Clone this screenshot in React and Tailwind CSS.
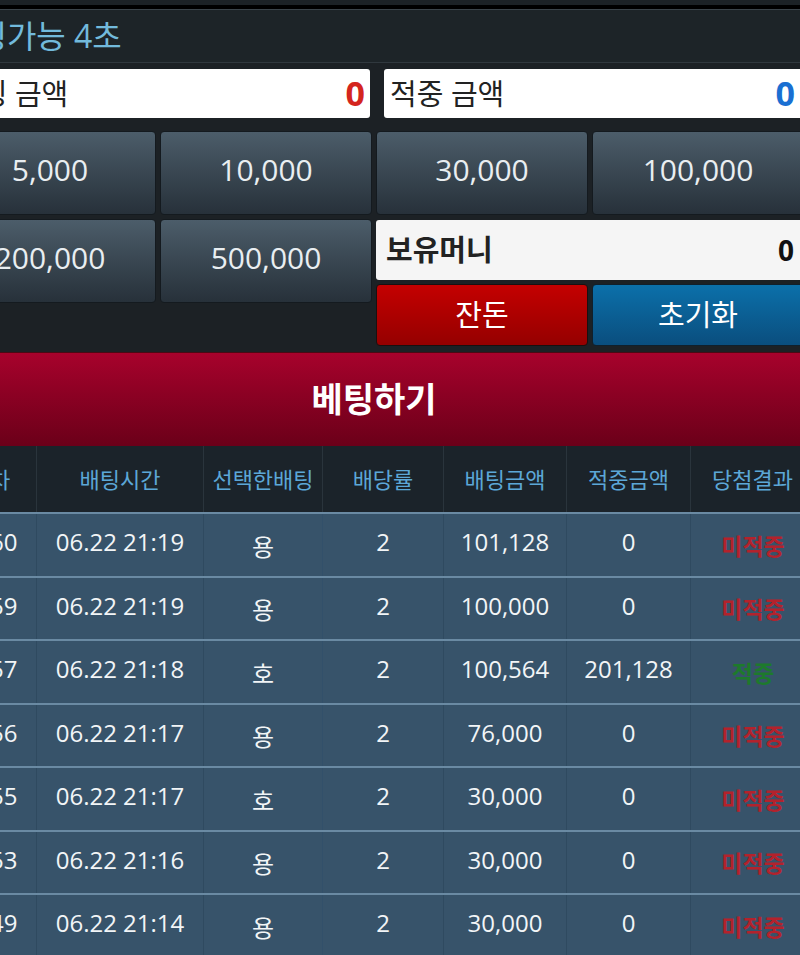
import React from 'react';

const font = { fontFamily: '"Open Sans", "Noto Sans CJK KR", sans-serif' };

const rows = [
  { no: '1260', time: '06.22 21:19', pick: '용', odds: '2', bet: '101,128', win: '0', result: '미적중' },
  { no: '1259', time: '06.22 21:19', pick: '용', odds: '2', bet: '100,000', win: '0', result: '미적중' },
  { no: '1257', time: '06.22 21:18', pick: '호', odds: '2', bet: '100,564', win: '201,128', result: '적중' },
  { no: '1256', time: '06.22 21:17', pick: '용', odds: '2', bet: '76,000', win: '0', result: '미적중' },
  { no: '1255', time: '06.22 21:17', pick: '호', odds: '2', bet: '30,000', win: '0', result: '미적중' },
  { no: '1253', time: '06.22 21:16', pick: '용', odds: '2', bet: '30,000', win: '0', result: '미적중' },
  { no: '1249', time: '06.22 21:14', pick: '용', odds: '2', bet: '30,000', win: '0', result: '미적중' },
];

const headers = ['회차', '배팅시간', '선택한배팅', '배당률', '배팅금액', '적중금액', '당첨결과'];

const ChipButton = ({ label }) => (
  <button className="h-[84px] pb-[8px] rounded-[4px] border border-[#141a1f] bg-gradient-to-b from-[#4c5d6a] to-[#27313a] text-[30px] text-[#e9eef1]">
    {label}
  </button>
);

const App = () => {
  return (
    <div className="w-[800px] h-[955px] overflow-hidden bg-[#1c2125]" style={font}>
      <div className="-ml-[56px] w-[871px]">
        {/* top strip */}
        <div className="h-[5px] bg-[#1c2226]" />
        <div className="h-[4px] bg-black" />
        <div className="h-[1px] bg-[#3b444a]" />

        {/* title */}
        <div className="h-[53px] bg-[#1d2428] border-b border-[#30383e] flex items-center pl-[4px]">
          <span className="text-[32px] text-[#72badc] leading-none">배팅가능 4초</span>
        </div>

        <div className="w-[860px] pt-[6px]">
          {/* amounts */}
          <div className="flex gap-[14px]">
            <div className="w-[426px] h-[49px] bg-white rounded-[3px] flex items-center justify-between pl-[10px] pr-[5px]">
              <span className="text-[29px] text-[#222]">배팅 금액</span>
              <span className="text-[34px] font-bold text-[#d4251e]">0</span>
            </div>
            <div className="w-[420px] h-[49px] bg-white rounded-[3px] flex items-center justify-between pl-[6px] pr-[9px]">
              <span className="text-[29px] text-[#222]">적중 금액</span>
              <span className="text-[34px] font-bold text-[#1a6fd2]">0</span>
            </div>
          </div>

          {/* chips & controls */}
          <div className="flex gap-[4px] mt-[13px]">
            <div className="w-[428px] grid grid-cols-2 gap-[4px] content-start">
              <ChipButton label="5,000" />
              <ChipButton label="10,000" />
              <ChipButton label="200,000" />
              <ChipButton label="500,000" />
            </div>
            <div className="w-[428px] flex flex-col">
              <div className="grid grid-cols-2 gap-[4px]">
                <ChipButton label="30,000" />
                <ChipButton label="100,000" />
              </div>
              <div className="mt-[5px] h-[60px] bg-[#f5f5f5] rounded-[3px] flex items-center justify-between pl-[10px] pr-[10px]">
                <span className="text-[29px] font-bold text-[#222]">보유머니</span>
                <span className="text-[28px] font-bold text-[#111]">0</span>
              </div>
              <div className="grid grid-cols-2 gap-[4px] mt-[4px]">
                <button className="h-[62px] rounded-[4px] border border-[#1a1010] bg-gradient-to-b from-[#c40000] to-[#950000] text-[29px] text-white">
                  잔돈
                </button>
                <button className="h-[62px] rounded-[4px] border border-[#10202c] bg-gradient-to-b from-[#0b70aa] to-[#0a4e7e] text-[29px] text-white">
                  초기화
                </button>
              </div>
            </div>
          </div>
        </div>

        {/* bet button */}
        <button className="mt-[6px] w-[860px] h-[94px] bg-gradient-to-b from-[#a7022c] to-[#6b0019] border-t border-[#4a0a14] text-[34px] font-bold text-white">
          베팅하기
        </button>

        {/* table */}
        <div className="grid grid-cols-[93px_167px_119px_121px_123px_124px_124px] bg-[#1b232a] border-b-2 border-[#6a8aa3]">
          {headers.map((h) => (
            <div
              key={h}
              className="h-[66px] flex items-center justify-center border-r border-[#2a343c] text-[22px] text-[#5ca7d7]"
            >
              {h}
            </div>
          ))}
        </div>
        {rows.map((r, i) => (
          <div
            key={i}
            className="grid grid-cols-[93px_167px_119px_121px_123px_124px_124px] bg-[#37536a] border-b-2 border-[#6a8aa3] text-[24px] text-[#f2f5f7]"
          >
            <div className="h-[61.5px] pb-[5px] flex items-center justify-center border-r border-[#2f4a60]">{r.no}</div>
            <div className="pb-[5px] flex items-center justify-center border-r border-[#2f4a60]">{r.time}</div>
            <div className="flex items-center justify-center border-r border-[#32506a] pt-[4px]">{r.pick}</div>
            <div className="pb-[5px] flex items-center justify-center border-r border-[#2f4a60]">{r.odds}</div>
            <div className="pb-[5px] flex items-center justify-center border-r border-[#2f4a60]">{r.bet}</div>
            <div className="pb-[5px] flex items-center justify-center border-r border-[#2f4a60]">{r.win}</div>
            <div
              className={
                r.result === '적중'
                  ? 'flex items-center justify-center text-[23px] font-bold text-[#1d7a2c] pt-[2px]'
                  : 'flex items-center justify-center text-[23px] font-bold text-[#b3222c] pt-[2px]'
              }
            >
              {r.result}
            </div>
          </div>
        ))}
      </div>
    </div>
  );
};

export default App;
